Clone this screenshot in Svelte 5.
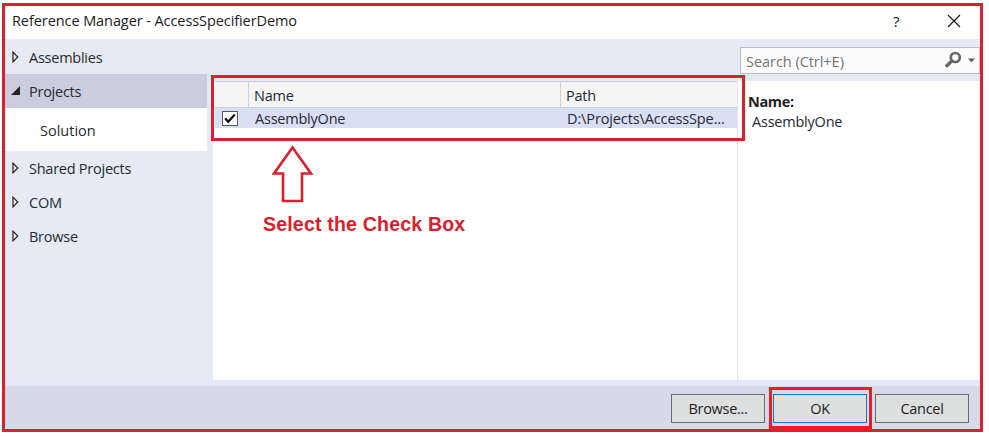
<script>
  const before = ['Assemblies'];
  const after = ['Shared Projects', 'COM', 'Browse'];
</script>

{#snippet item(label)}
  <div class="item">
    <svg width="8" height="12" viewBox="0 0 8 12"><path d="M1 1.2V10.8L5.8 6Z" fill="none" stroke="#222" stroke-width="1.2" /></svg>
    <span>{label}</span>
  </div>
{/snippet}

<div class="dialog">
  <header>
    <span class="title">Reference Manager - AccessSpecifierDemo</span>
    <span class="help">?</span>
    <svg class="close" width="14" height="14" viewBox="0 0 14 14"><path d="M1 1L13 13M13 1L1 13" stroke="#111" stroke-width="1.1" /></svg>
  </header>

  <div class="body">
    <nav>
      {#each before as label}{@render item(label)}{/each}
      <div class="item selected">
        <svg width="10" height="10" viewBox="0 0 10 10"><path d="M9 0V9H0Z" fill="#222" /></svg>
        <span>Projects</span>
      </div>
      <div class="sub"><span>Solution</span></div>
      <div class="rest">{#each after as label}{@render item(label)}{/each}</div>
    </nav>

    <main>
      <div class="table">
        <div class="row head"><span class="check"></span><span class="name">Name</span><span class="path">Path</span></div>
        <div class="row data">
          <span class="check">
            <svg width="16" height="15" viewBox="0 0 16 15"><rect x=".5" y=".5" width="15" height="14" fill="#fff" stroke="#555" /><path d="M3.2 7.2L6.2 10.8L12.8 3.4" fill="none" stroke="#111" stroke-width="2.2" /></svg>
          </span>
          <span class="name">AssemblyOne</span><span class="path">D:\Projects\AccessSpe...</span>
        </div>
      </div>
    </main>

    <aside>
      <div class="search">
        <span>Search (Ctrl+E)</span>
        <svg width="32" height="18" viewBox="0 0 32 18"><circle cx="11.3" cy="6.5" r="4.5" fill="none" stroke="#686868" stroke-width="2.7" /><path d="M7.8 10L1.8 15.8" stroke="#686868" stroke-width="3.4" /><path d="M24 7.5H31L27.5 11.5Z" fill="#606060" /></svg>
      </div>
      <div class="details"><b>Name:</b><span>AssemblyOne</span></div>
    </aside>
  </div>

  <footer>
    <button>Browse...</button>
    <button class="ok">OK</button>
    <button>Cancel</button>
  </footer>

  <div class="mark table-mark"></div>
  <div class="mark ok-mark"></div>
  <div class="callout">
    <svg width="42" height="58" viewBox="0 0 42 58"><path d="M20.5 2.5L39 28.5H30V56H11V28.5H2Z" fill="none" stroke="#d9202e" stroke-width="2.6" /></svg>
    <strong>Select the Check Box</strong>
  </div>
</div>

<style>
  :global(body) { background: #fff; }
  :global(#app) { padding: 3px 0 0 2px; }
  .dialog { position: relative; box-sizing: border-box; width: 981px; height: 429px; border: 3px solid #dc1f2d; display: flex; flex-direction: column; background: #fff; color: #262a31; font: 14.5px/20px "Open Sans", "Noto Sans", sans-serif; white-space: nowrap; }
  header { height: 33px; flex: none; display: flex; align-items: center; padding: 0 0 4px 7px; box-sizing: border-box; color: #1c1c1c; }
  .title { width: 881px; letter-spacing: -.08px; }
  .help { width: 54px; font-size: 15px; color: #111; }
  .close { flex: none; }
  .body { height: 347px; flex: none; display: grid; grid-template-columns: 208px 525px 242px; background: linear-gradient(#e5eaf4 341px, #e6e8f7 341px); }
  nav { padding-top: 1px; letter-spacing: -.25px; }
  .item { height: 34px; display: flex; align-items: center; padding-left: 6px; box-sizing: border-box; }
  .item svg { width: 10px; height: 12px; margin-right: 8px; flex: none; }
  .item span { padding-top: 1px; }
  .selected { width: 202px; background: #cbccdd; }
  .sub { width: 202px; height: 43px; box-sizing: border-box; padding: 13px 0 0 35px; background: #fff; letter-spacing: 0; }
  main { margin: 42px 0 6px; background: #fff; border-right: 1px solid #e2e5ed; }
  .table { border-top: 1px solid #cdd0d9; margin-left: 2px; }
  .row { display: grid; grid-template-columns: 33px 312px 1fr; letter-spacing: -.22px; }
  .head { height: 26px; box-sizing: border-box; background: #f5f5f5; border-bottom: 1px solid #cdd0d9; }
  .head .name, .head .path { border-left: 1px solid #cdd0d9; padding: 4px 0 0 5px; }
  .data { height: 20px; background: #d9dff5; }
  .data .check { padding: 3px 0 0 7px; line-height: 0; }
  .data .name, .data .path { padding-left: 7px; line-height: 21px; }
  .data .path { letter-spacing: -.12px; }
  aside { padding-top: 8px; }
  .search { height: 27px; margin-left: 2px; box-sizing: border-box; border: 1px solid #b8bed3; background: #fcfcfd; color: #737373; display: flex; justify-content: space-between; align-items: center; padding: 2px 3px 0 5px; }
  .search span { letter-spacing: -.04px; }
  .search svg { margin-top: -3px; }
  .details { margin-top: 7px; height: 299px; background: #fff; padding: 11px 0 0 10px; box-sizing: border-box; display: flex; flex-direction: column; }
  .details b { letter-spacing: -.35px; color: #1e1e1e; }
  .details span { padding-left: 4px; letter-spacing: -.22px; }
  footer { height: 43px; flex: none; background: #d6dae8; display: flex; justify-content: flex-end; gap: 8px; padding: 8px 11px 0 0; box-sizing: border-box; }
  button { width: 94px; height: 29px; padding: 1px 0 0; box-sizing: border-box; border: 1px solid #686b74; background: #dedfdf; color: #1c1c1c; font: inherit; letter-spacing: -.3px; }
  .ok { border-color: #1475c9; }
  .mark { position: absolute; box-sizing: border-box; border: 3px solid #dc1f2d; }
  .table-mark { left: 206px; top: 69px; width: 534px; height: 66px; }
  .ok-mark { left: 764px; top: 381px; width: 103px; height: 45px; border-color: #ea1c26; border-bottom-width: 6px; }
  .callout { position: absolute; left: 258px; top: 139px; display: flex; flex-direction: column; color: #d9202e; font: bold 19.5px/24px "Liberation Sans", Arial, sans-serif; letter-spacing: .2px; }
  .callout svg { margin: 0 0 9px 9px; }
</style>
